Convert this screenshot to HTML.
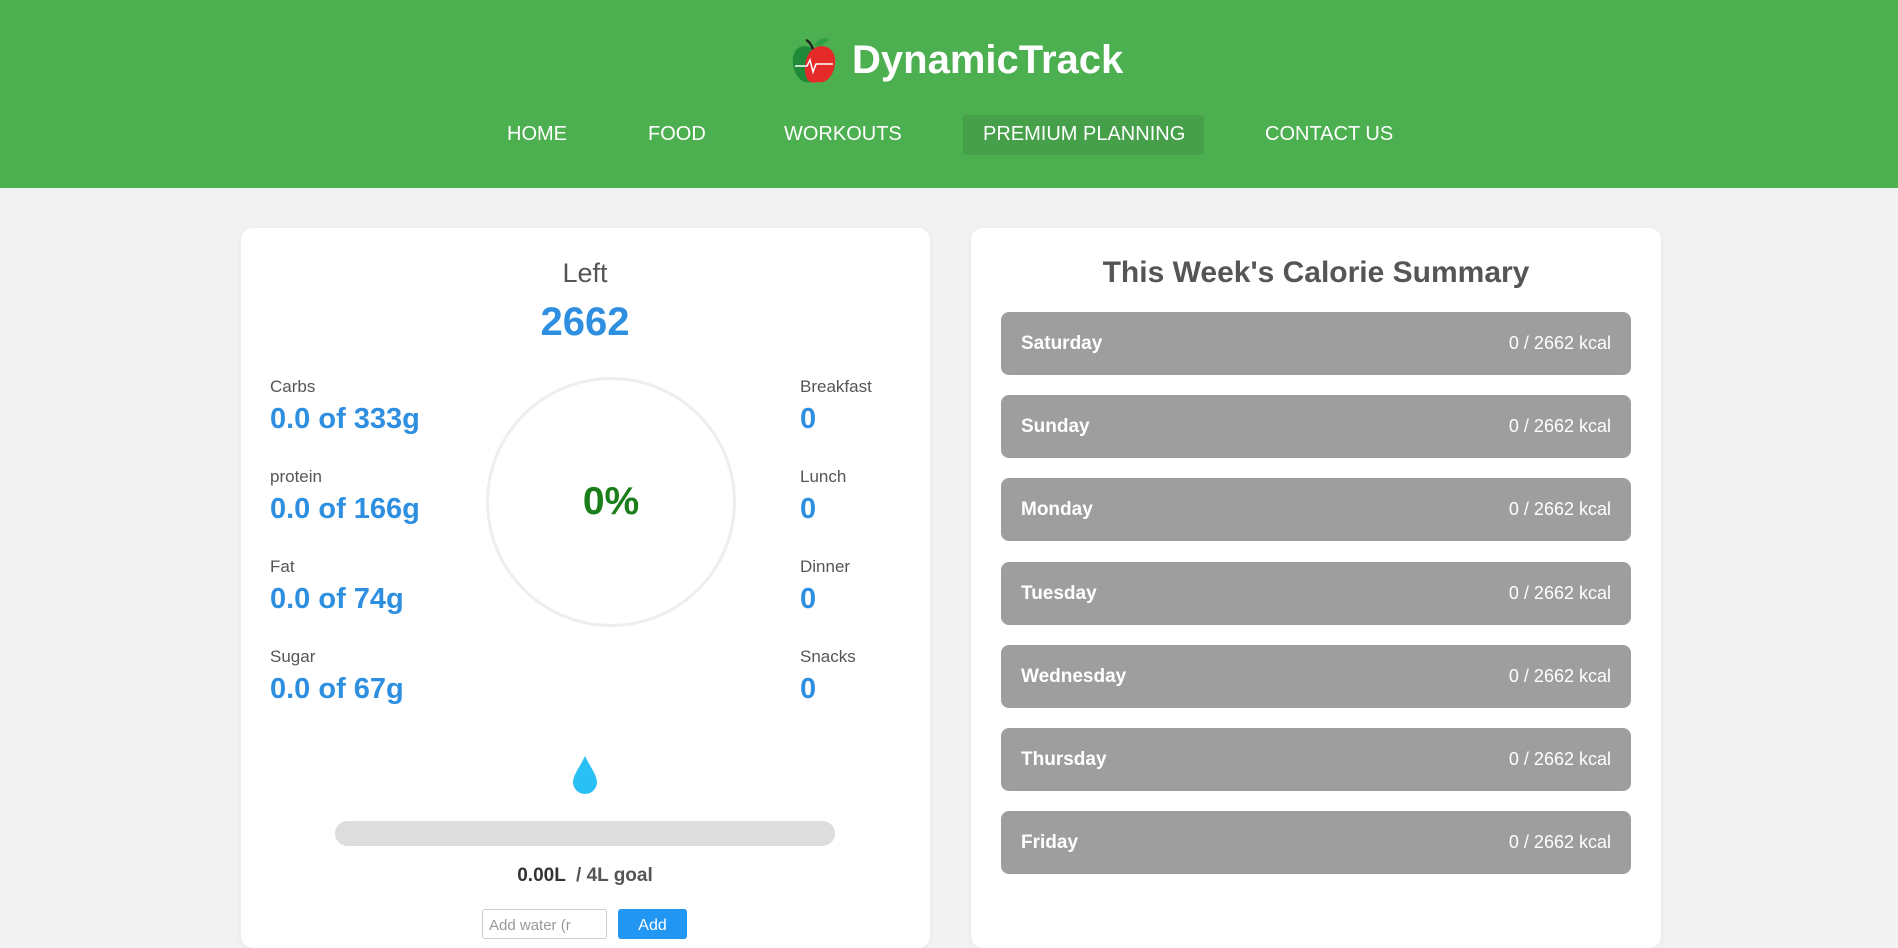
<!DOCTYPE html>
<html><head><meta charset="utf-8"><style>
*{margin:0;padding:0;box-sizing:border-box}
body{width:1898px;height:926px;overflow:hidden;background:#f2f2f2;font-family:"Liberation Sans",Arial,sans-serif;position:relative}
.abs{position:absolute}
header{position:absolute;left:0;top:0;width:1898px;height:188px;background:#4caf50}
.nav{position:absolute;top:122px;color:#fff;font-size:20px;line-height:24px}
.card{position:absolute;background:#fff;border-radius:12px;box-shadow:0 1px 6px rgba(0,0,0,.06)}
.lbl{position:absolute;font-size:17px;color:#555}
.val{position:absolute;font-size:29px;font-weight:bold;color:#2e8fe0}
.row{position:absolute;left:1001px;width:630px;height:63px;background:#9e9e9e;border-radius:8px;color:#fff}
.row b{position:absolute;left:20px;top:21px;font-size:19px}
.row span{position:absolute;right:20px;top:21px;font-size:18px}
</style></head><body>
<header>
<svg class="abs" style="left:789px;top:36px" width="50" height="50" viewBox="0 0 50 50">
<path d="M24 13 C14 6 2 12 4 28 C6 42 14 48 22 46 Z" fill="#1f8a3a"/>
<path d="M24 13 C34 6 48 12 46 28 C44 42 36 48 28 46 C26 47 22 47 20 45 C14 40 14 20 24 13Z" fill="#e52a2a"/>
<path d="M24 13 C22 8 20 5 17 4" stroke="#222" stroke-width="2.5" fill="none"/>
<path d="M25 10 C28 2 36 1 40 3 C36 9 30 11 25 10Z" fill="#2fa043"/>
<path d="M6 30 H18 L21 24 L24 36 L27 28 H44" stroke="#fff" stroke-width="1.5" fill="none"/>
</svg>
<div class="abs" style="left:852px;top:38px;font-size:40px;font-weight:bold;color:#fff">DynamicTrack</div>
<div class="nav" style="left:507px">HOME</div>
<div class="nav" style="left:648px">FOOD</div>
<div class="nav" style="left:784px">WORKOUTS</div>
<div class="abs" style="left:963px;top:115px;width:241px;height:40px;background:#45a049;border-radius:3px"></div>
<div class="nav" style="left:983px">PREMIUM PLANNING</div>
<div class="nav" style="left:1265px">CONTACT US</div>
</header>

<div class="card" style="left:241px;top:228px;width:689px;height:720px"></div>
<div class="abs" style="left:485px;width:200px;top:258px;text-align:center;font-size:27px;color:#555">Left</div>
<div class="abs" style="left:485px;width:200px;top:300px;text-align:center;font-size:40px;font-weight:bold;color:#2e8fe0">2662</div>

<div class="lbl" style="left:270px;top:377px">Carbs</div>
<div class="val" style="left:270px;top:403px">0.0 of 333g</div>
<div class="lbl" style="left:270px;top:467px">protein</div>
<div class="val" style="left:270px;top:493px">0.0 of 166g</div>
<div class="lbl" style="left:270px;top:557px">Fat</div>
<div class="val" style="left:270px;top:583px">0.0 of 74g</div>
<div class="lbl" style="left:270px;top:647px">Sugar</div>
<div class="val" style="left:270px;top:673px">0.0 of 67g</div>

<div class="lbl" style="left:800px;top:377px">Breakfast</div>
<div class="val" style="left:800px;top:403px">0</div>
<div class="lbl" style="left:800px;top:467px">Lunch</div>
<div class="val" style="left:800px;top:493px">0</div>
<div class="lbl" style="left:800px;top:557px">Dinner</div>
<div class="val" style="left:800px;top:583px">0</div>
<div class="lbl" style="left:800px;top:647px">Snacks</div>
<div class="val" style="left:800px;top:673px">0</div>

<div class="abs" style="left:486px;top:377px;width:250px;height:250px;border:3px solid #eee;border-radius:50%"></div>
<div class="abs" style="left:511px;width:200px;top:480px;text-align:center;font-size:39px;font-weight:bold;color:#1a7f1a">0%</div>

<svg class="abs" style="left:571px;top:755px" width="28" height="40" viewBox="0 0 28 40"><path d="M14 1 C10 10 2 20 2 27 A12 12 0 0 0 26 27 C26 20 18 10 14 1Z" fill="#29c0f5"/></svg>
<div class="abs" style="left:335px;top:821px;width:500px;height:25px;background:#ddd;border-radius:13px"></div>
<div class="abs" style="left:435px;width:300px;top:865px;text-align:center;font-size:19px;font-weight:bold;color:#333">0.00L <span style="color:#555">&nbsp;/ 4L goal</span></div>
<div class="abs" style="left:482px;top:909px;width:125px;height:30px;border:1px solid #ccc;border-radius:3px;font-size:15px;color:#999;padding:7px 6px">Add water (r</div>
<div class="abs" style="left:618px;top:909px;width:69px;height:30px;background:#2196f3;border-radius:3px;color:#fff;font-size:16px;text-align:center;padding-top:8px">Add</div>

<div class="card" style="left:971px;top:228px;width:690px;height:720px"></div>
<div class="abs" style="left:971px;width:690px;top:256px;text-align:center;font-size:30px;font-weight:bold;color:#555">This Week's Calorie Summary</div>
<div class="row" style="top:312px"><b>Saturday</b><span>0 / 2662 kcal</span></div>
<div class="row" style="top:395px"><b>Sunday</b><span>0 / 2662 kcal</span></div>
<div class="row" style="top:478px"><b>Monday</b><span>0 / 2662 kcal</span></div>
<div class="row" style="top:562px"><b>Tuesday</b><span>0 / 2662 kcal</span></div>
<div class="row" style="top:645px"><b>Wednesday</b><span>0 / 2662 kcal</span></div>
<div class="row" style="top:728px"><b>Thursday</b><span>0 / 2662 kcal</span></div>
<div class="row" style="top:811px"><b>Friday</b><span>0 / 2662 kcal</span></div>
</body></html>
